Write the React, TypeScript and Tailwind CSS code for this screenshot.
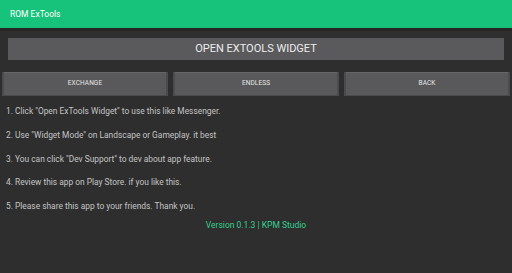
import React from "react";

const lines = [
  '1. Click "Open ExTools Widget" to use this like Messenger.',
  '2. Use "Widget Mode" on Landscape or Gameplay. it best',
  '3. You can click "Dev Support" to dev about app feature.',
  "4. Review this app on Play Store. if you like this.",
  "5. Please share this app to your friends. Thank you.",
];

function SmallBtn({ label }: { label: string }) {
  return (
    <div className="flex-1 h-[24px] bg-[#59595b] border-l-2 border-r-2 border-[#4b4b4d] shadow-[inset_0_1px_0_#666668,inset_0_-1px_0_#4a4a4c] flex items-center justify-center text-[6.5px] text-[#e6e6e6] tracking-[0.1px]">
      {label}
    </div>
  );
}

export default function App() {
  return (
    <div
      className="w-[512px] h-[273px] bg-[#2e2e2e] overflow-hidden flex flex-col"
      style={{ fontFamily: "Roboto, 'Liberation Sans', sans-serif" }}
    >
      <div className="h-[28px] bg-[#17c27a] flex items-center pl-[10px] text-[8.5px] text-white shrink-0">
        ROM ExTools
      </div>
      <div className="h-[3px] bg-[#262626] shrink-0" />
      <div className="px-[8px] pt-[7px] shrink-0">
        <div className="h-[22px] bg-[#5a5a5c] flex items-center justify-center text-[11px] text-[#ececec]">
          OPEN EXTOOLS WIDGET
        </div>
      </div>
      <div className="flex gap-[5px] px-[2px] mt-[12px] shrink-0">
        <SmallBtn label="EXCHANGE" />
        <SmallBtn label="ENDLESS" />
        <SmallBtn label="BACK" />
      </div>
      <div className="flex flex-col pl-[6px] mt-[10px] gap-[12.8px] text-[8.4px] text-[#c4c4c4] leading-[11px]">
        {lines.map((l) => (
          <div key={l}>{l}</div>
        ))}
      </div>
      <div className="mt-[8px] flex justify-center text-[8.5px] text-[#34d18f] leading-[11px]">
        Version 0.1.3 | KPM Studio
      </div>
    </div>
  );
}
